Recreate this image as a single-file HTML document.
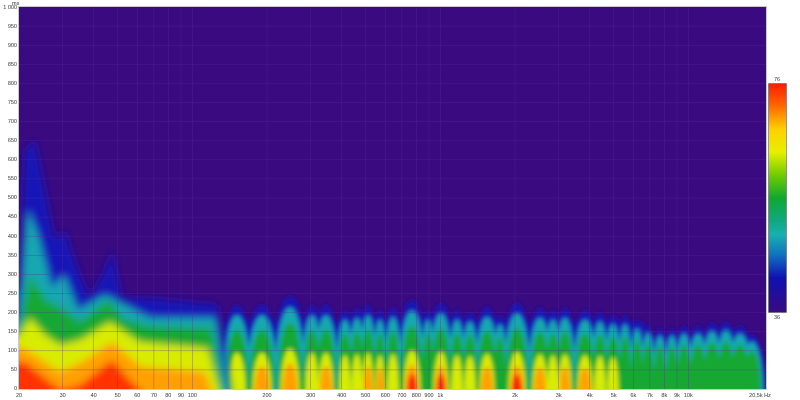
<!DOCTYPE html>
<html><head><meta charset="utf-8"><style>
html,body{margin:0;padding:0;background:#fff;width:800px;height:400px;overflow:hidden}
svg{position:absolute;left:0;top:0}
text{font-family:"Liberation Sans",sans-serif;font-size:5.5px;fill:#333}
</style></head><body>
<svg id="s" width="800" height="400" viewBox="0 0 800 400">
<defs>
<filter id="b" x="-20%" y="-20%" width="140%" height="140%"><feGaussianBlur stdDeviation="4"/></filter>
<filter id="b2" x="-20%" y="-20%" width="140%" height="140%"><feGaussianBlur stdDeviation="2"/></filter>
<clipPath id="c"><rect x="19" y="7" width="747" height="382"/></clipPath>
<linearGradient id="cb" x1="0" y1="0" x2="0" y2="1">
<stop offset="0" stop-color="#ff1a00"/><stop offset="0.1" stop-color="#ff6a00"/><stop offset="0.2" stop-color="#ffd000"/><stop offset="0.3" stop-color="#e6f000"/><stop offset="0.4" stop-color="#70cc00"/><stop offset="0.5" stop-color="#10a830"/><stop offset="0.6" stop-color="#10a880"/><stop offset="0.66" stop-color="#18b0b0"/><stop offset="0.75" stop-color="#1070c0"/><stop offset="0.85" stop-color="#1010b0"/><stop offset="1" stop-color="#3a0a80"/>
</linearGradient>
</defs>
<rect x="18" y="6" width="749" height="384" fill="#c8c8d0"/>
<rect x="19" y="7" width="747" height="382" fill="#3a0a80"/>
<g clip-path="url(#c)">
<g filter="url(#b2)">
<rect x="224" y="322" width="420" height="80" fill="#1818b8"/>
<rect x="224" y="332" width="420" height="70" fill="#18a8b0"/>
<rect x="224" y="350" width="420" height="60" fill="#14a830"/>
<rect x="640" y="336" width="115" height="60" fill="#1818b8"/>
<rect x="640" y="345" width="115" height="60" fill="#18a8b0"/>
<rect x="640" y="360" width="115" height="60" fill="#14a830"/>
<g id="lobes"></g>
</g>
<g filter="url(#b)">
<path fill="#1818b8" d="M10,400 L10,290 L19,290 L25,150 L35,140 L45,190 L55,240 L65,230 L75,262 L90,298 L105,270 L112,250 L122,298 L150,298 L200,303 L218,305 L232,400Z"/>
<path fill="#18a8b0" d="M10,400 L10,320 L19,318 L28,210 L38,235 L52,288 L64,275 L78,310 L105,295 L115,300 L150,318 L215,318 L230,400Z"/>
<path fill="#14a830" d="M10,400 L10,330 L19,328 L30,275 L45,300 L62,308 L80,322 L108,300 L125,320 L150,326 L212,328 L226,400Z"/>
<path fill="#d8ec00" d="M10,400 L10,338 L19,336 L30,318 L45,335 L60,345 L80,340 L110,322 L140,342 L208,348 L222,400Z"/>
<path fill="#ffa000" d="M10,400 L10,348 L19,346 L35,355 L60,372 L85,360 L112,342 L140,366 L205,372 L216,400Z"/>
<path fill="#ff3000" d="M10,400 L10,362 L25,362 L45,378 L60,390 L80,385 L112,360 L130,380 L150,400Z"/>
</g>
</g>
<g stroke="#5a2aa0" stroke-width="0.5" opacity="0.6">
<path d="M19,26.1H766M19,45.2H766M19,64.3H766M19,83.4H766M19,102.5H766M19,121.6H766M19,140.7H766M19,159.8H766M19,178.9H766M19,198H766M19,217.1H766M19,236.2H766M19,255.3H766M19,274.4H766M19,293.5H766M19,312.6H766M19,331.7H766M19,350.8H766M19,369.9H766"/>
<path d="M62.7,7V389M93.7,7V389M117.7,7V389M137.3,7V389M153.9,7V389M168.3,7V389M181,7V389M192.3,7V389M267,7V389M310.7,7V389M341.7,7V389M365.7,7V389M385.3,7V389M401.9,7V389M416.3,7V389M429,7V389M440.3,7V389M515,7V389M558.7,7V389M589.7,7V389M613.7,7V389M633.3,7V389M649.9,7V389M664.3,7V389M677,7V389M688.3,7V389"/>
</g>
<text x="12" y="5">ms</text>
<g text-anchor="end">
<text x="17" y="9">1 000</text><text x="17" y="28">950</text><text x="17" y="47">900</text><text x="17" y="66">850</text><text x="17" y="85">800</text><text x="17" y="104">750</text><text x="17" y="123">700</text><text x="17" y="142">650</text><text x="17" y="161">600</text><text x="17" y="180">550</text><text x="17" y="199">500</text><text x="17" y="218">450</text><text x="17" y="238">400</text><text x="17" y="257">350</text><text x="17" y="276">300</text><text x="17" y="295">250</text><text x="17" y="314">200</text><text x="17" y="333">150</text><text x="17" y="352">100</text><text x="17" y="371">50</text><text x="17" y="390">0</text>
</g>
<g text-anchor="middle">
<text x="19" y="397">20</text><text x="62.7" y="397">30</text><text x="93.7" y="397">40</text><text x="117.7" y="397">50</text><text x="137.3" y="397">60</text><text x="153.9" y="397">70</text><text x="168.3" y="397">80</text><text x="181" y="397">90</text><text x="192.3" y="397">100</text><text x="267" y="397">200</text><text x="310.7" y="397">300</text><text x="341.7" y="397">400</text><text x="365.7" y="397">500</text><text x="385.3" y="397">600</text><text x="401.9" y="397">700</text><text x="416.3" y="397">800</text><text x="429" y="397">900</text><text x="440.3" y="397">1k</text><text x="515" y="397">2k</text><text x="558.7" y="397">3k</text><text x="589.7" y="397">4k</text><text x="613.7" y="397">5k</text><text x="633.3" y="397">6k</text><text x="649.9" y="397">7k</text><text x="664.3" y="397">8k</text><text x="677" y="397">9k</text><text x="688.3" y="397">10k</text><text x="760" y="397">20,5k Hz</text>
</g>
<rect x="768.5" y="83.5" width="18" height="229" fill="url(#cb)" stroke="#666" stroke-width="0.6"/>
<text x="777" y="81" text-anchor="middle">76</text>
<text x="777" y="319" text-anchor="middle">36</text>
</svg>
<script>
(function(){
var L=[[237,9,305,3],[262,10,305,4],[290,10,296,4],[312,7,305,3],[326,8,305,4],[345,6,310,3],[357,6,308,3],[368,6,305,4],[380,5,310,4],[393,6,307,3],[412,9,300,5],[428,5,310,2],[441,8,303,5],[457,6,310,3],[470,6,312,3],[487,8,307,4],[500,5,315,2],[517,9,303,5],[540,8,308,4],[553,6,310,3],[565,7,308,4],[585,8,310,4],[600,6,312,3],[613,6,315,3],[625,5,315,2],[637,5,320,2],[648,5,325,2],[660,5,328,2],[672,5,328,2],[684,6,326,2],[698,7,326,2],[712,7,323,2],[726,7,322,2],[740,8,326,2],[752,7,335,2]];
var cols=["#1818b8","#18a8b0","#14a830","#d8ec00","#ffa000","#ff2000"];
var hr=[1,0.88,0.72,0.45,0.3,0.2], wr=[2.0,1.6,1.3,0.95,0.75,0.55];
var g=document.getElementById("lobes"),ns="http://www.w3.org/2000/svg";
for(var c=0;c<6;c++){for(var i=0;i<L.length;i++){var l=L[i];if(c>l[3])continue;
var H=389-l[2];var e=document.createElementNS(ns,"ellipse");
e.setAttribute("cx",l[0]);e.setAttribute("cy",392);e.setAttribute("rx",l[1]*wr[c]);e.setAttribute("ry",(H+3)*hr[c]);e.setAttribute("fill",cols[c]);g.appendChild(e);}}
})();
</script>
</body></html>
